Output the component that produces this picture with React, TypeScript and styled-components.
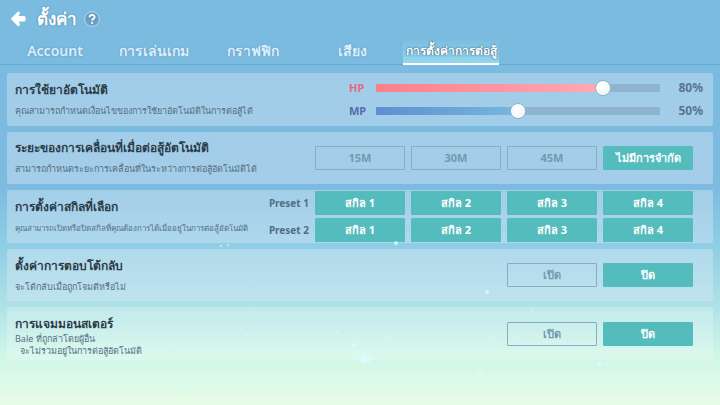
import React, { useState } from "react";
import styled, { createGlobalStyle, css } from "styled-components";

const GlobalStyle = createGlobalStyle`
  *, *::before, *::after { box-sizing: border-box; }
  body { margin: 0; }
  button, input { font-family: inherit; }
`;

const Page = styled.div`
  position: relative;
  display: flex;
  flex-direction: column;
  min-height: 100vh;
  overflow: hidden;
  font-family: "Noto Sans", "Open Sans", sans-serif;
  color: #2f4350;
  background: linear-gradient(
    180deg,
    #7abbdf 0%,
    #7cbbdf 46%,
    #8fcde5 60%,
    #ade1e7 75%,
    #cdf5e8 87%,
    #e8fde8 100%
  );
`;

const Sparkles = styled.svg`
  position: absolute;
  inset: 0;
  width: 100%;
  height: 100%;
  pointer-events: none;
`;

const Header = styled.header`
  display: flex;
  align-items: center;
  height: 38px;
  padding: 0 10px;
`;

const BackButton = styled.button`
  display: flex;
  padding: 0;
  border: 0;
  background: none;
  cursor: pointer;
`;

const Title = styled.h1`
  margin: 0 7px 0 11px;
  font-size: 17px;
  line-height: 24px;
  font-weight: 700;
  color: #fff;
  text-shadow: 0 0 2px #49789a;
`;

const HelpButton = styled(BackButton)``;

const Tabs = styled.nav`
  display: flex;
  gap: 3px;
  height: 27px;
  padding: 0 7px;
  border-bottom: 1px solid #65a9d0;
`;

const Tab = styled.button<{ $active: boolean }>`
  width: 96px;
  height: 27px;
  padding: 0;
  border: 0;
  border-bottom: 2px solid transparent;
  background: none;
  font-size: 14px;
  line-height: 20px;
  font-weight: 600;
  white-space: nowrap;
  color: #dceefb;
  text-shadow: 0 0 2px #5b92b8;
  cursor: pointer;
  ${({ $active }) =>
    $active &&
    css`
      border-bottom-color: #fff;
      background: linear-gradient(180deg, transparent, #93d7ee);
      background-clip: padding-box;
      font-size: 12px;
      font-weight: 700;
      color: #fff;
      text-shadow: 0 0 2px #33607e, 0 0 1px #33607e;
    `}
`;

const Panels = styled.main`
  flex: 1;
  display: grid;
  grid-template-rows: repeat(5, 1fr);
  gap: 6px;
  padding: 8px 7px 45px;
`;

const Panel = styled.section`
  display: flex;
  align-items: center;
  justify-content: space-between;
  padding: 0 20px 0 8px;
  border-radius: 2px;
  background: rgba(216, 230, 245, 0.42);
  &:last-child {
    background: rgba(255, 255, 255, 0.24);
  }
`;

const SliderPanel = styled(Panel)`
  padding-right: 10px;
`;

const Info = styled.div<{ $tight?: boolean }>`
  display: flex;
  flex-direction: column;
  gap: ${({ $tight }) => ($tight ? 1 : 7)}px;
  padding-top: ${({ $tight }) => ($tight ? 5 : 0)}px;
  white-space: nowrap;
`;

const Heading = styled.h2`
  margin: 0;
  font-size: 12px;
  line-height: 16px;
  font-weight: 600;
  color: #2c3c49;
`;

const Description = styled.p<{ $small?: boolean }>`
  margin: 0;
  font-size: ${({ $small }) => ($small ? 8 : 9)}px;
  line-height: 12px;
  white-space: pre;
  color: #557084;
`;

const Sliders = styled.div`
  display: flex;
  flex-direction: column;
  gap: 7px;
`;

const SliderRow = styled.label<{ $color: string }>`
  display: grid;
  grid-template-columns: 27px 284px 43px;
  align-items: center;
  height: 16px;
  font-size: 11px;
  line-height: 16px;
  font-weight: 700;
  color: ${({ $color }) => $color};
`;

const Value = styled.output`
  text-align: right;
  font-size: 12px;
  color: #587590;
`;

const SliderBox = styled.span`
  display: grid;
  align-items: center;
`;

const Track = styled.span`
  grid-area: 1 / 1;
  height: 8px;
  background: #8fb4cf;
`;

const Fill = styled.span<{ $fill: string }>`
  display: block;
  height: 8px;
  background: ${({ $fill }) => $fill};
`;

const Range = styled.input`
  grid-area: 1 / 1;
  height: 16px;
  margin: 0 -8px;
  appearance: none;
  background: transparent;
  cursor: pointer;
  &::-webkit-slider-thumb {
    appearance: none;
    width: 16px;
    height: 16px;
    border: 1px solid #8fb3c4;
    border-radius: 50%;
    background: radial-gradient(circle at 45% 40%, #fff 20%, #dff3f2 80%);
    box-shadow: inset 0 0 0 1px #fff;
  }
`;

const Choices = styled.div`
  display: flex;
  align-items: center;
  gap: 6px;
`;

const Presets = styled.div`
  display: flex;
  flex-direction: column;
  gap: 3px;
`;

const PresetName = styled.span`
  font-size: 10px;
  line-height: 16px;
  font-weight: 700;
  color: #526d86;
`;

const Choice = styled.button<{ $on: boolean }>`
  width: 90px;
  height: 24px;
  padding: 0;
  border: 1px solid ${({ $on }) => ($on ? "#55bcbd" : "#86adc3")};
  border-radius: 1px;
  background: ${({ $on }) => ($on ? "#55bcbd" : "transparent")};
  font-size: 11px;
  line-height: 16px;
  font-weight: 700;
  color: ${({ $on }) => ($on ? "#fff" : "#7399af")};
  cursor: pointer;
`;

const tabs = ["Account", "การเล่นเกม", "กราฟฟิก", "เสียง", "การตั้งค่าการต่อสู้"];
const ranges = ["15M", "30M", "45M", "ไม่มีการจำกัด"];
const skills = ["สกิล 1", "สกิล 2", "สกิล 3", "สกิล 4"];
const toggles = ["เปิด", "ปิด"];

const sparkles = [
  [221, 246, 1], [228, 245, 1], [396, 243, 2], [216, 315, 1], [142, 335, 1], [171, 346, 1],
  [178, 388, 2], [250, 312, 1], [247, 335, 1], [306, 326, 1], [337, 332, 1], [354, 345, 2],
  [388, 339, 1], [487, 292, 2], [532, 312, 1], [490, 326, 1], [492, 339, 1], [517, 338, 1],
  [600, 364, 2], [606, 363, 1], [480, 374, 2], [260, 374, 1],
];

function Slider(props: { name: string; initial: number; color: string; fill: string }) {
  const [value, setValue] = useState(props.initial);
  return (
    <SliderRow $color={props.color}>
      {props.name}
      <SliderBox>
        <Track>
          <Fill $fill={props.fill} style={{ width: `${value}%` }} />
        </Track>
        <Range type="range" min={0} max={100} value={value} onChange={(e) => setValue(Number(e.target.value))} />
      </SliderBox>
      <Value>{value}%</Value>
    </SliderRow>
  );
}

function Options({ items, initial }: { items: string[]; initial: number }) {
  const [selected, setSelected] = useState(initial);
  return (
    <Choices>
      {items.map((item, i) => (
        <Choice key={item} $on={i === selected} aria-pressed={i === selected} onClick={() => setSelected(i)}>
          {item}
        </Choice>
      ))}
    </Choices>
  );
}

export default function App() {
  const [tab, setTab] = useState(4);
  return (
    <>
      <GlobalStyle />
      <Page>
        <Sparkles viewBox="0 0 720 405" preserveAspectRatio="none" aria-hidden="true">
          <g fill="#dcfdff" opacity="0.8">
            {sparkles.map(([x, y, r]) => (
              <circle key={`${x}-${y}`} cx={x} cy={y} r={r} />
            ))}
            <path d="M364 352l2 4 5-1-2 4 2 4-5-1-2 3-2-3-4 1 2-4-2-4 4 1z" />
          </g>
        </Sparkles>
        <Header>
          <BackButton aria-label="กลับ">
            <svg width="16" height="16" viewBox="0 0 16 16">
              <path
                d="M1.3 7.2 7.4.9Q8.5 0 9.5.9 10.3 1.8 9.7 3.1L8.5 5.1H14.4Q15.7 5.3 15.7 7.8T14.4 10.4H8.5L9.7 12.6Q10.3 13.9 9.5 14.8 8.5 15.7 7.4 14.8L1.3 8.6Q.5 7.9 1.3 7.2Z"
                fill="#fff"
              />
            </svg>
          </BackButton>
          <Title>ตั้งค่า</Title>
          <HelpButton aria-label="ช่วยเหลือ">
            <svg width="16" height="16" viewBox="0 0 16 16">
              <circle cx="8" cy="8" r="7.3" fill="#6a9fc2" stroke="#b9d9ec" />
              <path d="M5.5 6.3C5.6 3.1 10.6 3.1 10.6 6 10.6 7.9 8.1 7.8 8.1 9.7" fill="none" stroke="#fff" strokeWidth="1.8" />
              <circle cx="8.1" cy="12" r="1.1" fill="#fff" />
            </svg>
          </HelpButton>
        </Header>
        <Tabs>
          {tabs.map((name, i) => (
            <Tab key={name} $active={i === tab} onClick={() => setTab(i)}>
              {name}
            </Tab>
          ))}
        </Tabs>
        <Panels>
          <SliderPanel>
            <Info>
              <Heading>การใช้ยาอัตโนมัติ</Heading>
              <Description>คุณสามารถกำหนดเงื่อนไขของการใช้ยาอัตโนมัติในการต่อสู้ได้</Description>
            </Info>
            <Sliders>
              <Slider name="HP" initial={80} color="#e66a7e" fill="linear-gradient(90deg, #fb7f8b, #ffa9b4)" />
              <Slider name="MP" initial={50} color="#5967b4" fill="linear-gradient(90deg, #5e8fd0, #76b7de)" />
            </Sliders>
          </SliderPanel>
          <Panel>
            <Info>
              <Heading>ระยะของการเคลื่อนที่เมื่อต่อสู้อัตโนมัติ</Heading>
              <Description>สามารถกำหนดระยะการเคลื่อนที่ในระหว่างการต่อสู้อัตโนมัติได้</Description>
            </Info>
            <Options items={ranges} initial={3} />
          </Panel>
          <Panel>
            <Info>
              <Heading>การตั้งค่าสกิลที่เลือก</Heading>
              <Description $small>คุณสามารถเปิดหรือปิดสกิลที่คุณต้องการได้เมื่ออยู่ในการต่อสู้อัตโนมัติ</Description>
            </Info>
            <Presets>
              {["Preset 1", "Preset 2"].map((preset) => (
                <Choices key={preset} role="group" aria-label={preset}>
                  <PresetName>{preset}</PresetName>
                  {skills.map((skill) => (
                    <Choice key={skill} $on>
                      {skill}
                    </Choice>
                  ))}
                </Choices>
              ))}
            </Presets>
          </Panel>
          <Panel>
            <Info>
              <Heading>ตั้งค่าการตอบโต้กลับ</Heading>
              <Description>จะโต้กลับเมื่อถูกโจมตีหรือไม่</Description>
            </Info>
            <Options items={toggles} initial={1} />
          </Panel>
          <Panel>
            <Info $tight>
              <Heading>การแจมมอนสเตอร์</Heading>
              <Description>{"Bale ที่ถูกล่าโดยผู้อื่น\n  จะไม่รวมอยู่ในการต่อสู้อัตโนมัติ"}</Description>
            </Info>
            <Options items={toggles} initial={1} />
          </Panel>
        </Panels>
      </Page>
    </>
  );
}
